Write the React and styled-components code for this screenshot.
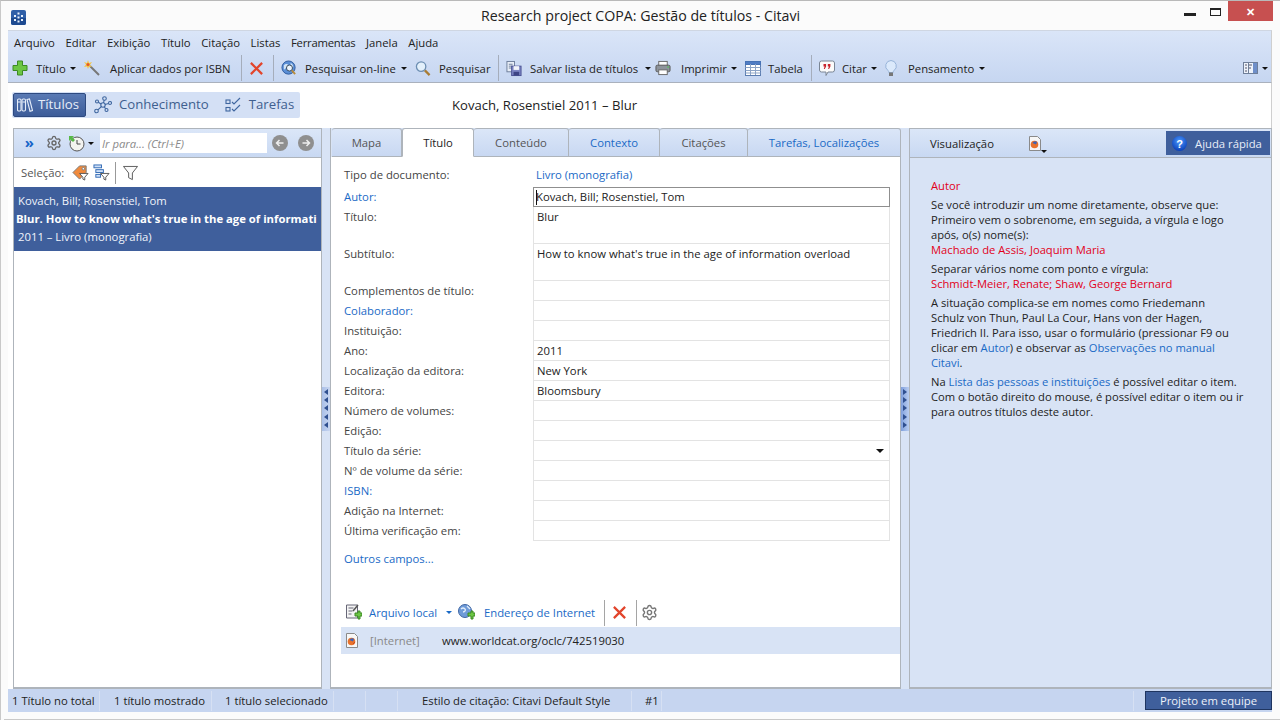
import styled, { createGlobalStyle } from 'styled-components';
import { Settings } from 'lucide-react';

const GlobalStyle = createGlobalStyle`
  html, body {
    margin: 0;
    padding: 0;
    background: #fbfbfb;
    overflow: hidden;
  }
  * { box-sizing: border-box; }
  body {
    font-family: "Open Sans", "Liberation Sans", sans-serif;
    font-size: 11.3px;
    color: #222;
  }
`;

const Plus = () => (
  <svg width="16" height="16" viewBox="0 0 16 16">
    <path d="M5.5 1h5v4.500H15v5h-4.500V15h-5v-4.500H1v-5h4.500z" fill="#6cc644" stroke="#3d8a24" />
  </svg>
);
const Wand = () => (
  <svg width="16" height="16" viewBox="0 0 16 16">
    <path d="M6 6l9 9" stroke="#777" strokeWidth="2" />
    <path d="M4 0l1 3 3-1-2 3 2 2-3-.5L4 9 3 6.500 0 7l2-2.500L0 2l3 1z" fill="#f5c542" />
    <circle cx="4" cy="4.500" r="1.500" fill="#e2572b" />
  </svg>
);
const RedX = ({ size = 16 }) => (
  <svg width={size} height={size} viewBox="0 0 16 16">
    <path d="M2 2l12 12M14 2L2 14" stroke="#e2452c" strokeWidth="2.400" />
  </svg>
);
const GlobeSearch = () => (
  <svg width="16" height="17" viewBox="0 0 17 17">
    <circle cx="8" cy="7.500" r="7" fill="#5b8fd6" stroke="#2f5b9e" />
    <path d="M3 5c2-2 4-1 5 0s0 3-2 3-2 3-3 1zM10 3c2 0 3 2 3 4l-2 1z" fill="#cfe3f7" />
    <circle cx="9" cy="8" r="3.200" fill="#eaf3fc" stroke="#345" />
    <path d="M11.500 10.500l3.500 4" stroke="#b98b3a" strokeWidth="2" />
  </svg>
);
const Magnifier = () => (
  <svg width="16" height="17" viewBox="0 0 17 17">
    <circle cx="6.500" cy="6.500" r="5" fill="#e3f0fb" stroke="#6d8fb3" strokeWidth="1.400" />
    <path d="M10.500 10.500l5 5" stroke="#a97c33" strokeWidth="2.400" />
  </svg>
);
const SaveList = () => (
  <svg width="16" height="17" viewBox="0 0 17 17">
    <rect x="1" y="1" width="8" height="11" fill="#e8eef7" stroke="#6c7c99" />
    <path d="M3 4h4M3 6h4M3 8h4" stroke="#6c7c99" />
    <rect x="6" y="6" width="10" height="10" fill="#7d86c4" stroke="#4a5294" />
    <rect x="8" y="6" width="6" height="4" fill="#f1f3fa" />
    <rect x="8" y="12" width="6" height="4" fill="#3e4585" />
  </svg>
);
const Printer = () => (
  <svg width="16" height="16" viewBox="0 0 17 16">
    <rect x="4" y="1" width="9" height="5" fill="#fff" stroke="#666" />
    <rect x="1" y="5" width="15" height="7" rx="1.500" fill="#8d939b" stroke="#555" />
    <rect x="4" y="10" width="9" height="5" fill="#fff" stroke="#666" />
    <path d="M13 7h2" stroke="#4c4" />
  </svg>
);
const TableIcon = () => (
  <svg width="16" height="15" viewBox="0 0 16 15">
    <rect x=".5" y=".5" width="15" height="14" fill="#fff" stroke="#5b7db1" />
    <rect x=".5" y=".5" width="15" height="3" fill="#4f7cc4" stroke="#4672b6" />
    <path d="M.5 6.500h15M.5 9.500h15M.5 12h15M5.500 3v11M10.500 3v11" stroke="#8da4c6" />
  </svg>
);
const Quote = () => (
  <svg width="16" height="16" viewBox="0 0 16 16">
    <path d="M2.500 1h11a2 2 0 012 2v7a2 2 0 01-2 2H9l-2 3.500V12H2.500a2 2 0 01-2-2V3a2 2 0 012-2z" fill="#fbfbfb" stroke="#7a8594" />
    <path d="M4.500 4h2.600v2.500L5.800 9H4.800l.8-2.500H4.500zM8.800 4h2.600v2.500L10.100 9H9.100l.8-2.500H8.800z" fill="#c8242c" />
  </svg>
);
const Bulb = () => (
  <svg width="12" height="17" viewBox="0 0 12 17">
    <path d="M6 .5a5.500 5.500 0 00-3 10c.6.5.8 1.200.8 2h4.400c0-.8.200-1.500.8-2a5.500 5.500 0 00-3-10z" fill="#dbe9fb" stroke="#97b3d8" />
    <rect x="4" y="12.500" width="4" height="3.500" fill="#777" />
  </svg>
);
const ColumnsIcon = () => (
  <svg width="15" height="12" viewBox="0 0 15 12">
    <rect x=".5" y=".5" width="14" height="11" fill="#eef3fb" stroke="#6f7f99" />
    <rect x="10" y="1" width="4" height="10" fill="#6f8fc9" />
    <path d="M2 3h2M2 6h2M2 9h2M6 3h3M6 6h2" stroke="#556" />
    <path d="M5.500 1v10" stroke="#6f7f99" />
  </svg>
);
const Books = () => (
  <svg width="16" height="16" viewBox="0 0 16 16" fill="none" stroke="#e6edf9" strokeWidth="1.100">
    <rect x=".5" y="2" width="3.500" height="12" rx="1.200" />
    <rect x="5" y="2" width="3.500" height="12" rx="1.200" />
    <path d="M10 2.500l2.500-.5 3 11.500-2.500.7z" />
    <path d="M1 5h2.500M5.500 5H8" />
  </svg>
);
const Nodes = () => (
  <svg width="18" height="18" viewBox="0 0 18 18" fill="none" stroke="#3f669f" strokeWidth="1.100">
    <circle cx="9" cy="9" r="2.200" />
    <circle cx="10.500" cy="2.500" r="1.800" />
    <circle cx="16" cy="7" r="1.500" />
    <circle cx="3" cy="5.500" r="1.500" />
    <circle cx="2.500" cy="15" r="1.800" />
    <circle cx="12.500" cy="14" r="1.500" />
    <path d="M9.500 7l.7-3M11 8.500l3.500-1M7 8L4.300 6.300M7.500 10.500l-3.600 3.300M10.300 10.800l1.300 2" />
  </svg>
);
const Checks = () => (
  <svg width="17" height="16" viewBox="0 0 17 16" fill="none" stroke="#3f669f" strokeWidth="1.100">
    <rect x="1" y="3" width="4" height="3.500" />
    <rect x="1" y="10.500" width="4" height="3.500" />
    <path d="M7 5l2 2 6-6M7 12l2 2 6-6" />
  </svg>
);
const Clock = () => (
  <svg width="17" height="17" viewBox="0 0 17 17">
    <circle cx="9" cy="9" r="7" fill="#f3f3f0" stroke="#555" />
    <path d="M9 5v4h3.500" stroke="#444" fill="none" />
    <path d="M1 1h5l-1.500 1.500L7 5 5 7 2.500 4.500 1 6z" fill="#58b947" />
  </svg>
);
const ArrowCircle = ({ left }) => (
  <svg width="16" height="16" viewBox="0 0 16 16">
    <circle cx="8" cy="8" r="8" fill="#8f8f8f" />
    <path d={left ? 'M11.500 8H5M7.500 5L4.500 8l3 3' : 'M4.500 8H11M8.500 5l3 3-3 3'} stroke="#eee" strokeWidth="1.500" fill="none" />
  </svg>
);
const TagFilter = () => (
  <svg width="17" height="17" viewBox="0 0 18 18">
    <path d="M1 9l7-7h7v7l-7 7z" fill="#f08a3c" stroke="#777" />
    <circle cx="12" cy="5" r="1.300" fill="#fff" stroke="#777" />
    <path d="M8 10h9l-3.500 4v3l-2-1v-2z" fill="#fff" stroke="#555" />
  </svg>
);
const TreeFilter = () => (
  <svg width="17" height="17" viewBox="0 0 18 18" fill="none">
    <rect x="1" y="1" width="8" height="3" fill="#cfe0f7" stroke="#3169b4" />
    <rect x="3" y="6" width="8" height="3" fill="#cfe0f7" stroke="#3169b4" />
    <rect x="3" y="11" width="5" height="3" fill="#cfe0f7" stroke="#3169b4" />
    <path d="M8 10h9l-3.500 4v3l-2-1v-2z" fill="#fff" stroke="#555" />
  </svg>
);
const Funnel = () => (
  <svg width="15" height="16" viewBox="0 0 16 16">
    <path d="M.5 1h15L10 8v7l-4-2V8z" fill="#fbfbfb" stroke="#555" />
  </svg>
);
const FileFox = ({ small }) => (
  <svg width="12" height="15" viewBox="0 0 12 15">
    <path d="M.5.500h8l3 3v11H.5z" fill="#f7f7f7" stroke="#8a8a8a" />
    <circle cx="5.500" cy="8.500" r="3.800" fill="#e8722c" />
    <path d="M3.500 7a3 3 0 014.500-1l-1 2.500z" fill="#3f63b5" />
    {small ? null : <path d="M7 11l2-2" stroke="#c9481c" />}
  </svg>
);
const AttachFile = () => (
  <svg width="17" height="17" viewBox="0 0 17 17">
    <path d="M1.500 1h11v13h-11z" fill="#f4f4f4" stroke="#667" />
    <path d="M3.500 4h5M3.500 7h4M3.500 10h3" stroke="#667" />
    <path d="M13 1l-5 6" stroke="#555" strokeWidth="1.500" />
    <path d="M10 9h3V7h2v2h2v3h-2v3h-2v-3h-3z" fill="#6cc644" stroke="#3d8a24" />
  </svg>
);
const AttachGlobe = () => (
  <svg width="17" height="17" viewBox="0 0 17 17">
    <circle cx="7" cy="7" r="6.500" fill="#6f9bd8" stroke="#3f66a3" />
    <path d="M3 5c2-2 3-1 4 0s0 3-2 3M9 2l3 3" stroke="#e3eefb" strokeWidth="1.300" fill="none" />
    <path d="M10 9h3V7h2v2h2v3h-2v3h-2v-3h-3z" fill="#6cc644" stroke="#3d8a24" />
  </svg>
);
const HelpBall = () => (
  <svg width="15" height="15" viewBox="0 0 15 15">
    <defs>
      <radialGradient id="ball" cx="50%" cy="35%" r="65%">
        <stop offset="0%" stopColor="#4c9bff" />
        <stop offset="100%" stopColor="#0a3fb8" />
      </radialGradient>
    </defs>
    <circle cx="7.500" cy="7.500" r="7.500" fill="url(#ball)" />
    <text x="7.500" y="11.500" textAnchor="middle" fontSize="11" fontWeight="700" fill="#fff" fontFamily="Liberation Sans">?</text>
  </svg>
);
const AppLogo = () => (
  <svg width="15" height="15" viewBox="0 0 15 15">
    <rect width="15" height="15" rx="2" fill="#2f5fa8" />
    <path d="M0 8h15v5a2 2 0 01-2 2H2a2 2 0 01-2-2z" fill="#1d4a90" />
    <g fill="#e8f0fb">
      <rect x="6.500" y="2.500" width="2" height="2" />
      <rect x="3" y="5" width="2" height="2" />
      <rect x="10" y="5" width="2" height="2" />
      <rect x="6.500" y="6.500" width="2" height="2" />
      <rect x="3" y="9" width="2" height="2" />
      <rect x="10" y="9" width="2" height="2" />
      <rect x="6.500" y="10.500" width="2" height="2" />
    </g>
  </svg>
);

const fields = [
  { label: 'Complementos de título:' },
  { label: 'Colaborador:', link: true },
  { label: 'Instituição:' },
  { label: 'Ano:', value: '2011' },
  { label: 'Localização da editora:', value: 'New York' },
  { label: 'Editora:', value: 'Bloomsbury' },
  { label: 'Número de volumes:' },
  { label: 'Edição:' },
  { label: 'Título da série:', select: true },
  { label: 'Nº de volume da série:' },
  { label: 'ISBN:', link: true },
  { label: 'Adição na Internet:' },
  { label: 'Última verificação em:' },
];

const tabs = [
  { name: 'Mapa', width: 70 },
  { name: 'Título', width: 72, active: true },
  { name: 'Conteúdo', width: 95 },
  { name: 'Contexto', width: 91, link: true },
  { name: 'Citações', width: 88 },
  { name: 'Tarefas, Localizações', width: 153, link: true },
];

export default function App() {
  return (
    <Window>
      <GlobalStyle />
      <TitleBar>
        <LogoSlot><AppLogo /></LogoSlot>
        <WindowTitle>Research project COPA: Gestão de títulos - Citavi</WindowTitle>
        <WindowButtons>
          <MinButton />
          <MaxButton />
          <CloseButton>✕</CloseButton>
        </WindowButtons>
      </TitleBar>

      <Client>
        <Bars>
          <MenuBar>
            {['Arquivo', 'Editar', 'Exibição', 'Título', 'Citação', 'Listas'].map(item => (
              <MenuItem key={item}>{item}</MenuItem>
            ))}
            <MenuItem $narrow>Ferramentas</MenuItem>
            <MenuItem>Janela</MenuItem>
            <MenuItem>Ajuda</MenuItem>
          </MenuBar>
          <Toolbar>
            <ToolButton><Plus /><ToolLabel $w={30}>Título</ToolLabel><Caret /></ToolButton>
            <ToolButton $gap={10}><Wand /><ToolLabel $w={122}>Aplicar dados por ISBN</ToolLabel></ToolButton>
            <ToolSep />
            <ToolButton><RedX size={15} /></ToolButton>
            <ToolSep />
            <ToolButton><GlobeSearch /><ToolLabel $w={92}>Pesquisar on-line</ToolLabel><Caret /></ToolButton>
            <ToolButton><Magnifier /><ToolLabel $w={50}>Pesquisar</ToolLabel></ToolButton>
            <ToolSep />
            <ToolButton $tight><SaveList /><ToolLabel $w={111}>Salvar lista de títulos</ToolLabel><Caret /></ToolButton>
            <ToolButton $gap={10}><Printer /><ToolLabel $w={44}>Imprimir</ToolLabel><Caret /></ToolButton>
            <ToolButton $gap={7}><TableIcon /><ToolLabel $w={34}>Tabela</ToolLabel></ToolButton>
            <ToolSep />
            <ToolButton $gap={7}><Quote /><ToolLabel $w={26}>Citar</ToolLabel><Caret /></ToolButton>
            <ToolButton $gap={11}><Bulb /><ToolLabel $w={64}>Pensamento</ToolLabel><Caret /></ToolButton>
            <ToolEnd><ColumnsIcon /><Caret /></ToolEnd>
          </Toolbar>
        </Bars>

        <NavRow>
          <NavGroup>
            <NavItem $active><Books />Títulos</NavItem>
            <NavItem><Nodes />Conhecimento</NavItem>
            <NavItem><Checks />Tarefas</NavItem>
          </NavGroup>
          <CurrentTitle>Kovach, Rosenstiel 2011 – Blur</CurrentTitle>
        </NavRow>

        <Panes>
          <LeftPane>
            <PaneHeader>
              <Chevrons>»</Chevrons>
              <GearSlot><Settings size={16} color="#666" /></GearSlot>
              <Clock />
              <HistoryCaret />
              <GoTo>Ir para... (Ctrl+E)</GoTo>
              <ArrowCircle left />
              <NextSlot><ArrowCircle /></NextSlot>
            </PaneHeader>
            <SelectionRow>
              <SelectionLabel>Seleção:</SelectionLabel>
              <TagFilter />
              <TreeFilter />
              <SelectionSep />
              <Funnel />
            </SelectionRow>
            <SelectedItem>
              <ItemLine>Kovach, Bill; Rosenstiel, Tom</ItemLine>
              <ItemStrong>Blur. How to know what's true in the age of informati</ItemStrong>
              <ItemLine>2011 – Livro (monografia)</ItemLine>
            </SelectedItem>
          </LeftPane>

          <Gutter>
            <Grip>{[0, 1, 2, 3, 4].map(i => <GripArrow key={i} />)}</Grip>
          </Gutter>

          <MiddlePane>
            <TabStrip>
              {tabs.map(tab => (
                <Tab key={tab.name} $width={tab.width} $active={tab.active} $link={tab.link}>{tab.name}</Tab>
              ))}
            </TabStrip>
            <MiddleBody>
              <Form>
                <DocLabel>Tipo de documento:</DocLabel>
                <DocValue>Livro (monografia)</DocValue>

                <FieldLabel $link>Autor:</FieldLabel>
                <AuthorField><CaretBar />Kovach, Bill; Rosenstiel, Tom</AuthorField>

                <FieldLabel>Título:</FieldLabel>
                <TallField>Blur</TallField>

                <FieldLabel>Subtítulo:</FieldLabel>
                <TallField>How to know what's true in the age of information overload</TallField>

                {fields.map(field => [
                  <FieldLabel key={field.label} $link={field.link}>{field.label}</FieldLabel>,
                  <Field key={field.label + '-value'}>
                    {field.value}
                    {field.select ? <SelectArrow /> : null}
                  </Field>,
                ])}
              </Form>
              <MoreFields>Outros campos...</MoreFields>

              <AttachBar>
                <AttachFile />
                <AttachLabel $w={70}>Arquivo local</AttachLabel>
                <BlueCaret />
                <AttachFirst><AttachGlobe /></AttachFirst>
                <AttachLabel $w={111}>Endereço de Internet</AttachLabel>
                <AttachSep />
                <RedX size={15} />
                <AttachSep />
                <AttachGear size={17} color="#777" strokeWidth={2} />
              </AttachBar>
              <AttachRow>
                <FileFox />
                <AttachType>[Internet]</AttachType>
                <AttachUrl>www.worldcat.org/oclc/742519030</AttachUrl>
              </AttachRow>
            </MiddleBody>
          </MiddlePane>

          <Gutter>
            <Grip $strong>{[0, 1, 2, 3, 4].map(i => <GripArrow key={i} $right />)}</Grip>
          </Gutter>

          <RightPane>
            <RightHeader>
              <PreviewLabel>Visualização</PreviewLabel>
              <PreviewFile><FileFox small /><FileCaret /></PreviewFile>
              <HelpButton><HelpBall />Ajuda rápida</HelpButton>
            </RightHeader>
            <HelpBody>
              <HelpTitle>Autor</HelpTitle>
              <HelpPara>
                Se você introduzir um nome diretamente, observe que:<br />
                Primeiro vem o sobrenome, em seguida, a vírgula e logo<br />
                após, o(s) nome(s):<br />
                <Red>Machado de Assis, Joaquim Maria</Red>
              </HelpPara>
              <HelpPara>
                Separar vários nome com ponto e vírgula:<br />
                <Red>Schmidt-Meier, Renate; Shaw, George Bernard</Red>
              </HelpPara>
              <HelpPara>
                A situação complica-se em nomes como Friedemann<br />
                Schulz von Thun, Paul La Cour, Hans von der Hagen,<br />
                Friedrich II. Para isso, usar o formulário (pressionar F9 ou<br />
                clicar em <Blue>Autor</Blue>) e observar as <Blue>Observações no manual</Blue><br />
                <Blue>Citavi</Blue>.
              </HelpPara>
              <HelpPara>
                Na <Blue>Lista das pessoas e instituições</Blue>  é possível editar o item.<br />
                Com o botão direito do mouse, é possível editar o item ou ir<br />
                para outros títulos deste autor.
              </HelpPara>
            </HelpBody>
          </RightPane>
        </Panes>

        <StatusBar>
          <StatusCell $w={92}>1 Título no total</StatusCell>
          <StatusCell $w={112} $indent={14}>1 título mostrado</StatusCell>
          <StatusCell $w={122} $indent={13}>1 título selecionado</StatusCell>
          <StatusCell $w={32} />
          <StatusCell $w={32} />
          <StatusCell $w={234} $indent={24}>Estilo de citação: Citavi Default Style</StatusCell>
          <StatusCell $w={30} $indent={13}>#1</StatusCell>
          <StatusFill />
          <TeamButton>Projeto em equipe</TeamButton>
        </StatusBar>
      </Client>
      <BottomEdge />
    </Window>
  );
}

const Window = styled.div`
  width: 1280px;
  height: 720px;
  display: flex;
  flex-direction: column;
  border-top: 1px solid #b9b9b9;
  border-left: 1px solid #c9c9c9;
  background: #fbfbfb;
`;

const TitleBar = styled.div`
  height: 29px;
  flex: none;
  display: flex;
  align-items: center;
  position: relative;
  padding-left: 10px;
`;

const LogoSlot = styled.div`
  display: flex;
  margin-top: 3px;
`;

const WindowTitle = styled.div`
  flex: 1;
  text-align: center;
  font-size: 14.2px;
  color: #222;
  margin-left: -25px;
`;

const WindowButtons = styled.div`
  position: absolute;
  top: 0;
  right: 7px;
  display: flex;
  align-items: flex-start;
`;

const MinButton = styled.div`
  width: 12px;
  height: 3px;
  background: #222;
  margin: 12px 14px 0 0;
`;

const MaxButton = styled.div`
  width: 11px;
  height: 8px;
  border: 1px solid #222;
  border-top-width: 2px;
  margin: 7px 7px 0 0;
`;

const CloseButton = styled.div`
  width: 45px;
  height: 20px;
  background: #c75050;
  color: #fff;
  font-size: 11px;
  font-weight: 700;
  display: flex;
  align-items: center;
  justify-content: center;
`;

const Client = styled.div`
  height: 683px;
  flex: none;
  margin: 0 8px 0 7px;
  display: flex;
  flex-direction: column;
`;

const Bars = styled.div`
  height: 53px;
  flex: none;
  background: linear-gradient(#dae5f8, #c6d6f1);
  border-top: 1px solid #cfd6e2;
  border-right: 1px solid #cfcfcf;
  border-bottom: 1px solid #aab1bd;
`;

const MenuBar = styled.div`
  height: 23px;
  display: flex;
  align-items: center;
  padding: 0 0 0 6px;
  gap: 10.6px;
`;

const MenuItem = styled.span`
  color: #222;
  letter-spacing: ${props => props.$narrow ? '-0.25px' : '0'};
`;

const Toolbar = styled.div`
  height: 28px;
  display: flex;
  align-items: center;
`;

const ToolButton = styled.div`
  height: 27px;
  display: flex;
  align-items: center;
  gap: ${props => props.$gap || 8}px;
  padding: 0 ${props => props.$tight ? 0 : 4}px 0 4px;
  flex: none;
`;

const ToolLabel = styled.span`
  width: ${props => props.$w}px;
  white-space: nowrap;
  color: #222;
`;

const Caret = styled.span`
  flex: none;
  width: 0;
  height: 0;
  border-left: 3px solid transparent;
  border-right: 3px solid transparent;
  border-top: 3px solid #111;
  margin-left: -4px;
`;

const HistoryCaret = styled(Caret)`
  margin-left: -1px;
`;

const ToolSep = styled.div`
  width: 1px;
  height: 26px;
  background: #a5adbb;
  margin: 0 3px 0 5px;
  flex: none;
`;

const ToolEnd = styled.div`
  margin-left: auto;
  display: flex;
  align-items: center;
  gap: 8px;
  padding-right: 3px;
`;

const NavRow = styled.div`
  height: 45px;
  flex: none;
  display: flex;
  align-items: center;
  padding: 0 0 1px 4px;
  background: #fff;
  border-right: 1px solid #cfcfcf;
`;

const NavGroup = styled.div`
  width: 288px;
  height: 26px;
  background: #d4e0f5;
  border-radius: 2px;
  display: flex;
  align-items: center;
  padding-left: 1px;
`;

const NavItem = styled.div`
  height: 24px;
  display: flex;
  align-items: center;
  gap: ${props => props.$active ? '5px' : '7px'};
  padding: ${props => props.$active ? '0 6px 2px 3px' : '0 7px 2px'};
  font-size: 13.2px;
  border-radius: 2px;
  color: ${props => props.$active ? '#e6edf9' : '#3f5f8f'};
  background: ${props => props.$active ? 'linear-gradient(#5a7ab4, #3c5c99)' : 'transparent'};
  border: ${props => props.$active ? '1px solid #2e4a80' : '1px solid transparent'};
  > svg {
    margin-top: 2px;
  }
`;

const CurrentTitle = styled.div`
  margin: 0 0 1px 152px;
  font-size: 13.1px;
  color: #222;
`;

const Panes = styled.div`
  height: 561px;
  flex: none;
  display: flex;
  padding-left: 5px;
  background: linear-gradient(to right, #fff 5px, #d8e3f5 5px);
`;

const LeftPane = styled.div`
  width: 309px;
  flex: none;
  background: #fff;
  border: 1px solid #aeb4bb;
  border-bottom-width: 2px;
  display: flex;
  flex-direction: column;
`;

const PaneHeader = styled.div`
  height: 29px;
  flex: none;
  background: linear-gradient(#dbe6f8, #c8d8f2);
  border-bottom: 1px solid #aeb4bb;
  display: flex;
  align-items: center;
  gap: 4px;
`;

const Chevrons = styled.span`
  width: 25px;
  text-align: right;
  padding-right: 5px;
  color: #1464c8;
  font-size: 15px;
  font-weight: 700;
  line-height: 16px;
  margin-top: -3px;
`;

const GearSlot = styled.span`
  display: flex;
  margin-left: 3px;
  margin-right: 2px;
`;

const GoTo = styled.div`
  width: 167px;
  height: 20px;
  background: #fff;
  color: #8a8a8a;
  font-style: italic;
  display: flex;
  align-items: center;
  padding-left: 2px;
  margin: 0 1px 0 2px;
`;

const NextSlot = styled.span`
  display: flex;
  margin-left: 6px;
`;

const SelectionRow = styled.div`
  height: 29px;
  flex: none;
  display: flex;
  align-items: center;
  gap: 4px;
  padding-left: 7px;
`;

const SelectionLabel = styled.span`
  color: #555;
  margin-right: 4px;
`;

const SelectionSep = styled.div`
  width: 1px;
  height: 22px;
  background: #999;
  margin: 0 3px 0 1px;
`;

const SelectedItem = styled.div`
  height: 64px;
  flex: none;
  background: #3f5f9c;
  color: #f0f4fb;
  padding: 5px 0 0 4px;
  overflow: hidden;
`;

const ItemLine = styled.div`
  line-height: 18px;
  white-space: nowrap;
`;

const ItemStrong = styled(ItemLine)`
  font-weight: 700;
  color: #fff;
  margin-left: -2px;
  overflow: hidden;
`;

const Gutter = styled.div`
  width: 8px;
  flex: none;
  display: flex;
  align-items: center;
  justify-content: center;
`;

const Grip = styled.div`
  width: 8px;
  height: 44px;
  display: flex;
  flex-direction: column;
  align-items: center;
  justify-content: space-evenly;
  background: ${props => props.$strong ? 'linear-gradient(to right, #7f9fdc, #b9cdf0)' : 'linear-gradient(to right, #a9bfe8, #c8d6f0)'};
`;

const GripArrow = styled.span`
  width: 0;
  height: 0;
  border-top: 3px solid transparent;
  border-bottom: 3px solid transparent;
  ${props => props.$right ? 'border-left: 4px solid #2f4f8f;' : 'border-right: 4px solid #2f4f8f;'}
`;

const MiddlePane = styled.div`
  width: 571px;
  flex: none;
  display: flex;
  flex-direction: column;
`;

const TabStrip = styled.div`
  height: 29px;
  flex: none;
  display: flex;
  padding-left: 1px;
  background: #d8e3f5;
  border-left: 1px solid #aeb4bb;
`;

const Tab = styled.div`
  width: ${props => props.$width}px;
  display: flex;
  align-items: center;
  justify-content: center;
  border: 1px solid #aeb4bb;
  border-left-width: ${props => props.$active ? '1px' : '0'};
  border-bottom: 1px solid ${props => props.$active ? '#fff' : '#aeb4bb'};
  border-radius: 3px 3px 0 0;
  color: ${props => props.$active ? '#222' : props.$link ? '#1a6ac6' : '#555'};
  background: ${props => props.$active ? '#fff' : 'linear-gradient(#dbe6f8, #c8d8f2)'};
`;

const MiddleBody = styled.div`
  flex: 1;
  background: #fff;
  border-left: 1px solid #aeb4bb;
  border-right: 1px solid #aeb4bb;
  border-bottom: 2px solid #aeb4bb;
  padding-top: 9px;
  display: flex;
  flex-direction: column;
`;

const Form = styled.div`
  display: grid;
  grid-template-columns: 189px 357px;
  margin-left: 13px;
`;

const DocLabel = styled.div`
  color: #444;
  line-height: 18px;
  height: 21px;
`;

const DocValue = styled(DocLabel)`
  color: #1a6ac6;
  padding-left: 3px;
`;

const FieldLabel = styled.div`
  color: ${props => props.$link ? '#1a6ac6' : '#444'};
  line-height: 20px;
  white-space: nowrap;
`;

const Field = styled.div`
  position: relative;
  height: 20px;
  border: 1px solid #e3e3e3;
  border-top: none;
  padding-left: 3px;
  line-height: 19px;
  color: #222;
  white-space: nowrap;
`;

const AuthorField = styled(Field)`
  border: 1px solid #8f8f8f;
  line-height: 18px;
  padding-left: 2px;
`;

const TallField = styled(Field)`
  height: 37px;
`;

const CaretBar = styled.span`
  position: absolute;
  left: 2px;
  top: 2px;
  width: 1px;
  height: 15px;
  background: #111;
`;

const SelectArrow = styled.span`
  position: absolute;
  right: 5px;
  top: 8px;
  width: 0;
  height: 0;
  border-left: 4px solid transparent;
  border-right: 4px solid transparent;
  border-top: 4px solid #111;
`;

const MoreFields = styled.div`
  color: #1a6ac6;
  margin: 8px 0 0 13px;
  line-height: 20px;
`;

const AttachBar = styled.div`
  height: 29px;
  margin-top: 29px;
  display: flex;
  align-items: center;
  padding-left: 14px;
  gap: 7px;
`;

const AttachFirst = styled.span`
  display: flex;
  margin: 0 2px 0 -1px;
`;

const AttachLabel = styled.span`
  width: ${props => props.$w}px;
  white-space: nowrap;
  color: #1a6ac6;
`;

const BlueCaret = styled.span`
  width: 0;
  height: 0;
  border-left: 3px solid transparent;
  border-right: 3px solid transparent;
  border-top: 3px solid #1a6ac6;
`;

const AttachSep = styled.div`
  width: 1px;
  height: 26px;
  background: #a5a5a5;
  margin-left: 2px;
`;

const AttachGear = styled(Settings)`
  margin-left: -3px;
`;

const AttachRow = styled.div`
  height: 27px;
  margin-left: 10px;
  background: #d8e3f5;
  display: flex;
  align-items: center;
  padding: 0 0 1px 5px;
`;

const AttachType = styled.span`
  color: #888;
  width: 72px;
  margin-left: 12px;
`;

const AttachUrl = styled.span`
  color: #222;
`;

const RightPane = styled.div`
  width: 363px;
  flex: none;
  display: flex;
  flex-direction: column;
  background: #d8e3f5;
  border: 1px solid #aeb4bb;
  border-bottom-width: 2px;
`;

const RightHeader = styled.div`
  height: 29px;
  flex: none;
  display: flex;
  align-items: center;
  border-bottom: 1px solid #aeb4bb;
  background: linear-gradient(#dbe6f8, #c8d8f2);
  padding-left: 20px;
`;

const PreviewLabel = styled.span`
  width: 99px;
  color: #222;
`;

const PreviewFile = styled.span`
  display: flex;
  align-items: flex-end;
`;

const FileCaret = styled.span`
  width: 0;
  height: 0;
  border-left: 3px solid transparent;
  border-right: 3px solid transparent;
  border-top: 3px solid #111;
  margin-bottom: -2px;
`;

const HelpButton = styled.div`
  margin-left: auto;
  margin-right: 1px;
  width: 104px;
  height: 24px;
  background: #3f5f9c;
  color: #e8eef9;
  display: flex;
  align-items: center;
  gap: 8px;
  padding-left: 6px;
`;

const HelpBody = styled.div`
  padding: 20px 0 0 21px;
  font-size: 11.2px;
  line-height: 15px;
  white-space: nowrap;
`;

const HelpTitle = styled.div`
  color: #e2001a;
  margin-bottom: 4px;
`;

const HelpPara = styled.p`
  margin: 0 0 4px;
  color: #222;
`;

const Red = styled.span`
  color: #e2001a;
`;

const Blue = styled.span`
  color: #1a6ac6;
`;

const StatusBar = styled.div`
  height: 23px;
  flex: none;
  display: flex;
  align-items: center;
  background: #c6d5f0;
`;

const StatusCell = styled.div`
  width: ${props => props.$w}px;
  height: 20px;
  flex: none;
  line-height: 20px;
  padding-left: ${props => props.$indent || 4}px;
  border-right: 1px solid #d6e0f3;
  white-space: nowrap;
  color: #222;
`;

const StatusFill = styled.div`
  flex: 1;
  height: 20px;
  border-right: 1px solid #d6e0f3;
`;

const TeamButton = styled.div`
  width: 127px;
  height: 19px;
  margin-left: 11px;
  background: #3f5f9c;
  border: 1px solid #1f3560;
  color: #eef2fa;
  display: flex;
  align-items: center;
  justify-content: center;
`;

const BottomEdge = styled.div`
  height: 1px;
  margin: 6px 0 0 3px;
  background: #c9c9c9;
`;
